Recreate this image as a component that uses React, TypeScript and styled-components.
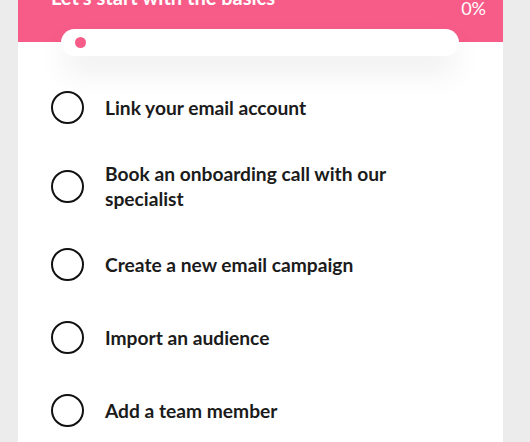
import React from "react";
import styled, { createGlobalStyle } from "styled-components";

const GlobalStyle = createGlobalStyle`
  html, body {
    margin: 0;
    padding: 0;
    background: #ececec;
  }
  * { box-sizing: border-box; }
`;

const PINK = "#f75c89";

const Page = styled.div`
  height: 442px;
  overflow: hidden;
  padding: 0 27px 0 18px;
  background: #ececec;
  font-family: Lato, "Noto Sans", sans-serif;
`;

const Card = styled.div`
  margin-top: -20px;
  background: #ffffff;
  min-height: 520px;
`;

const Header = styled.div`
  display: flex;
  flex-direction: column;
  padding: 5px 17px 0 33px;
  background: linear-gradient(
    to bottom,
    ${PINK} 0,
    ${PINK} calc(100% - 14px),
    #ffffff calc(100% - 14px)
  );
`;

const TopRow = styled.div`
  display: flex;
  justify-content: space-between;
  align-items: flex-start;
  height: 34px;
`;

const Title = styled.h1`
  margin: 0;
  font-size: 20px;
  line-height: 24px;
  font-weight: 700;
  color: #ffffff;
`;

const Percent = styled.span`
  margin-top: 15px;
  font-size: 18px;
  line-height: 16px;
  font-weight: 400;
  color: #ffffff;
`;

const Track = styled.div`
  margin: 10px 27px 0 10px;
  height: 27px;
  border-radius: 14px;
  background: #ffffff;
  display: flex;
  align-items: center;
  padding-left: 14px;
  box-shadow: 0 16px 30px rgba(0, 0, 0, 0.07);
`;

const Dot = styled.span`
  width: 11px;
  height: 11px;
  border-radius: 50%;
  background: ${PINK};
`;

const List = styled.ul`
  list-style: none;
  margin: 0;
  padding: 32px 44px 0 33px;
  display: flex;
  flex-direction: column;
  gap: 34px;
`;

const Item = styled.li`
  display: flex;
  align-items: center;
  gap: 21px;
  min-height: 39px;
`;

const Check = styled.span`
  flex-shrink: 0;
  width: 33px;
  height: 33px;
  border-radius: 50%;
  border: 2.5px solid #111111;
`;

const Label = styled.span`
  font-size: 19.2px;
  line-height: 25px;
  font-weight: 700;
  color: #1b1b1b;
`;

const tasks = [
  "Link your email account",
  "Book an onboarding call with our specialist",
  "Create a new email campaign",
  "Import an audience",
  "Add a team member",
];

export default function App() {
  return (
    <>
      <GlobalStyle />
      <Page>
        <Card>
          <Header>
            <TopRow>
              <Title>Let's start with the basics</Title>
              <Percent>0%</Percent>
            </TopRow>
            <Track>
              <Dot />
            </Track>
          </Header>
          <List>
            {tasks.map((t) => (
              <Item key={t}>
                <Check />
                <Label>{t}</Label>
              </Item>
            ))}
          </List>
        </Card>
      </Page>
    </>
  );
}
